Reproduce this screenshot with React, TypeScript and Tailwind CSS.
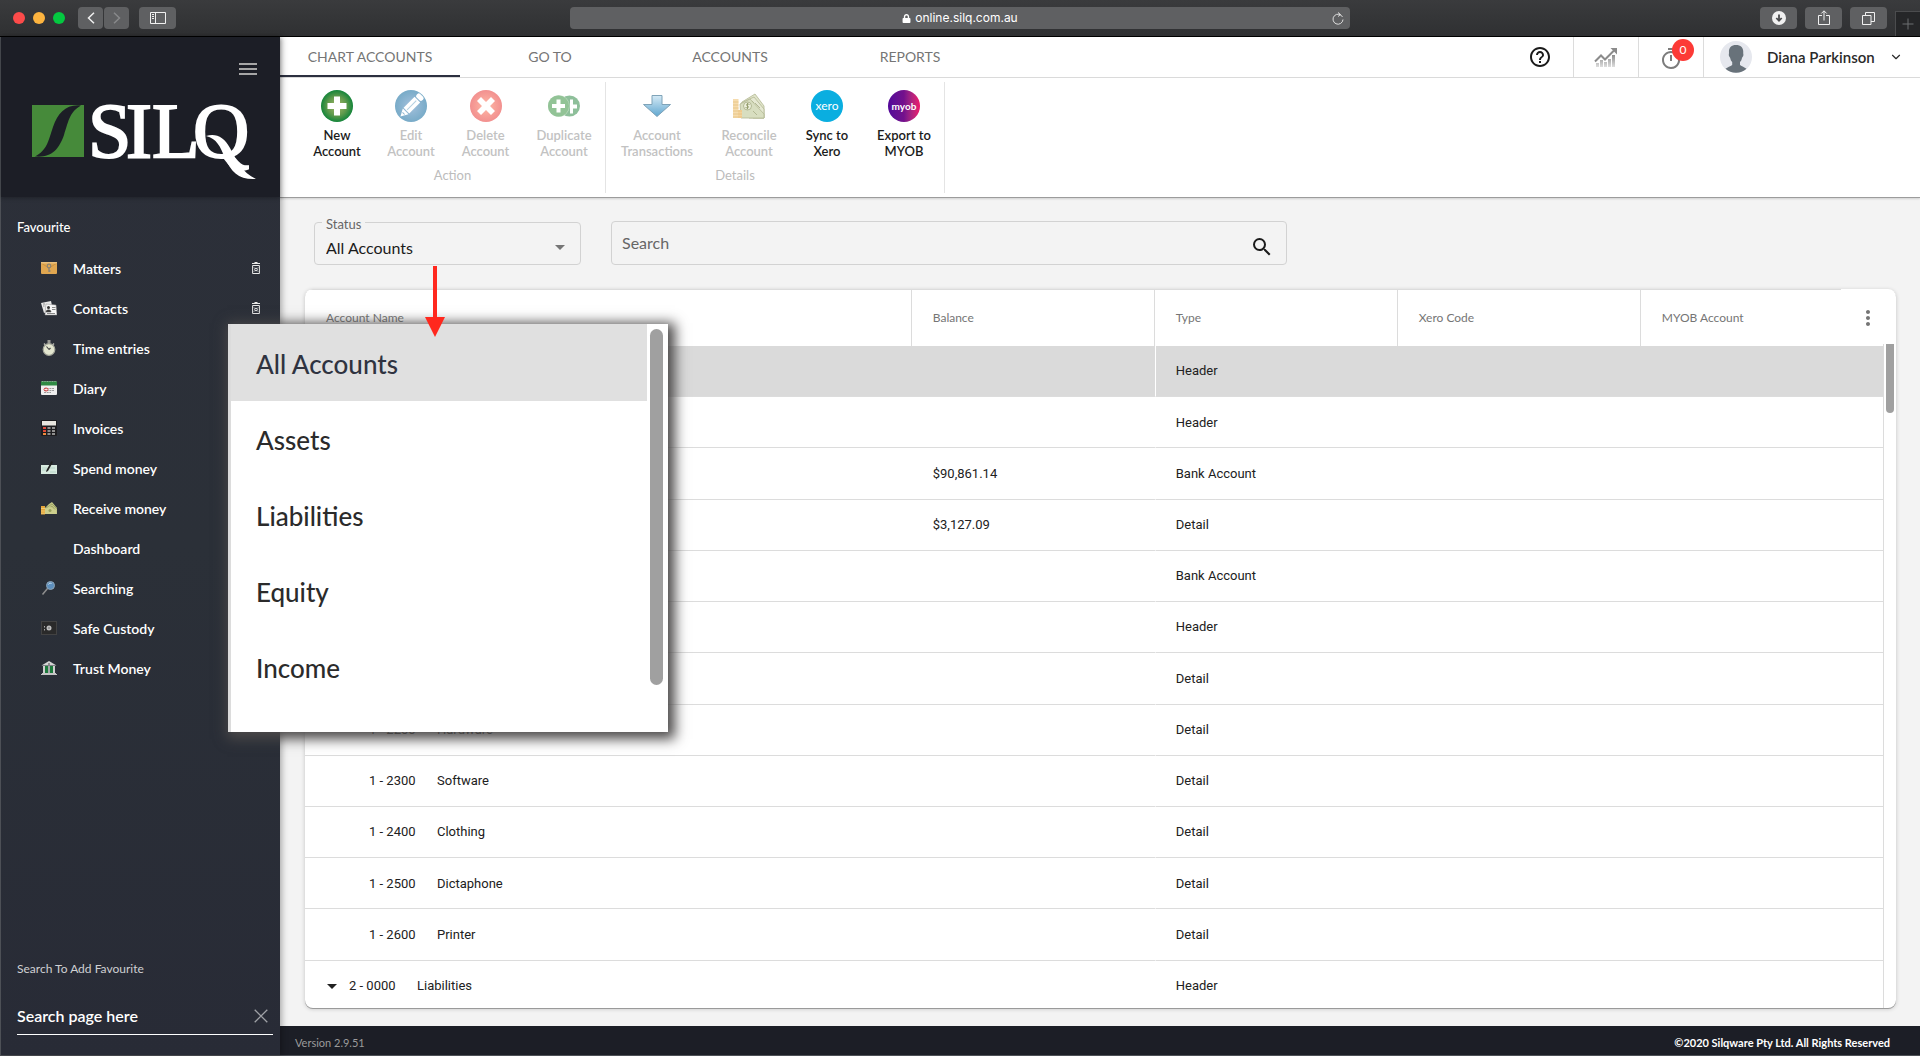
import type { ReactNode } from "react";
import { MdArrowDropDown, MdHelpOutline, MdMoreVert, MdOutlineTimer, MdSearch } from "react-icons/md";
import { FiChevronDown } from "react-icons/fi";
import { FaLock } from "react-icons/fa";

/* ---------- browser chrome ---------- */

function ChromeButton({ label, width, children }: { label: string; width: string; children: ReactNode }) {
  return (
    <button aria-label={label} className={`flex h-[22px] items-center justify-center rounded bg-[#5f6062] text-white ${width}`}>
      {children}
    </button>
  );
}

function TitleBar() {
  return (
    <header className="grid h-[37px] shrink-0 grid-cols-[1fr_minmax(0,780px)_1fr] items-center border-b border-black bg-linear-to-b from-[#3a3b3d] to-[#2f3032]">
      <div className="flex items-center pl-[13px]">
        <div className="flex gap-2">
          <span className="size-3 rounded-full bg-[#fc4b4a]" />
          <span className="size-3 rounded-full bg-[#fdb43f]" />
          <span className="size-3 rounded-full bg-[#04c840]" />
        </div>
        <div className="ml-[13px] flex gap-px">
          <ChromeButton label="Back" width="w-[25px]">
            <svg width="8" height="12" viewBox="0 0 8 12" fill="none" stroke="#f0f0f0" strokeWidth="1.5"><path d="M7 .7 1.5 6 7 11.3" /></svg>
          </ChromeButton>
          <ChromeButton label="Forward" width="w-[25px]">
            <svg width="8" height="12" viewBox="0 0 8 12" fill="none" stroke="#88898b" strokeWidth="1.5"><path d="M1 .7 6.500 6 1 11.3" /></svg>
          </ChromeButton>
        </div>
        <div className="ml-[10px]">
          <ChromeButton label="Toggle sidebar" width="w-[37px]">
            <svg width="16" height="12" viewBox="0 0 16 12" fill="none" stroke="#f0f0f0"><path d="M.5.5h15v11H.5zM5.500.5v11M2 2.500h2M2 4.500h2M2 6.500h2" /></svg>
          </ChromeButton>
        </div>
      </div>
      <div className="relative flex h-[22px] items-center justify-center gap-1 rounded bg-[#5f6062] font-['Inter',sans-serif] text-xs text-white">
        <FaLock size={9} />
        <span>online.silq.com.au</span>
        <button aria-label="Reload" className="absolute right-1.5">
          <svg width="12" height="13" viewBox="0 0 12 13" fill="none" stroke="#dedede"><path d="M10.500 5A5 5 0 1 0 11 7.500M6 .5l2.500 2L6 4.500" /></svg>
        </button>
      </div>
      <div className="flex h-full items-center justify-end gap-2">
        <ChromeButton label="Downloads" width="w-[37px]">
          <svg width="14" height="14" viewBox="0 0 14 14"><circle cx="7" cy="7" r="7" fill="#f0f0f0" /><path d="M7 3.500v6M4.300 7 7 9.800 9.700 7" fill="none" stroke="#4a4b4d" strokeWidth="1.800" /></svg>
        </ChromeButton>
        <ChromeButton label="Share" width="w-[37px]">
          <svg width="12" height="16" viewBox="0 0 12 16" fill="none" stroke="#f0f0f0"><path d="M4 5.500H.5v9h11v-9H8M6 10.500V1M3.300 3.500 6 .8l2.700 2.700" /></svg>
        </ChromeButton>
        <ChromeButton label="Show tabs" width="w-[37px]">
          <svg width="13" height="13" viewBox="0 0 13 13" fill="none" stroke="#f0f0f0"><path d="M.5 3.500h8.500v9H.5zM3.500 3.500v-3h9v9H9" /></svg>
        </ChromeButton>
        <button aria-label="New tab" className="flex h-[25px] w-[25px] items-center justify-center self-end border-t border-l border-[#4b4c4e] bg-[#252628]">
          <svg width="12" height="12" viewBox="0 0 12 12" stroke="#6d6e70"><path d="M6 .5v11M.5 6h11" /></svg>
        </button>
      </div>
    </header>
  );
}

/* ---------- sidebar ---------- */

function Logo() {
  return (
    <svg width="226" height="106" viewBox="31 80 226 106" role="img" aria-label="SILQ">
      <rect x="32" y="105" width="52" height="52" fill="#468a3a" />
      <path d="M81 105.500C66 104 58 113 53 127C48 142 47 150 35 156.500C52 158 59 149 64 135C69 119 70 112 81 105.500Z" fill="#1c1e26" />
      <text x="88 126 152 193" y="157" fill="#fff" stroke="#fff" strokeWidth="2" fontFamily="Liberation Serif, serif" fontSize="78">SILQ</text>
      <path d="M206 136c10-3 18 1 24 12 7 14 12 24 26 31-17 1-25-7-31-21-5-12-8-19-19-22Z" fill="#fff" />
    </svg>
  );
}

const itemIcons: Record<string, ReactNode> = {
  Matters: (
    <>
      <rect y="2" width="16" height="12" rx="1" fill="#e0a650" />
      <path d="M0 3l8 5 8-5" fill="none" stroke="#c48a3a" strokeWidth=".7" />
      <rect x="0" y="2" width="16" height="1.500" fill="#eac07c" />
      <circle cx="8" cy="6" r="1.800" fill="none" stroke="#8a8476" strokeWidth="1.200" />
      <path d="M8 7.500v4.500M8 11h1.500" stroke="#8a8476" strokeWidth="1.300" />
    </>
  ),
  Contacts: (
    <>
      <path d="M0 3l10-2 2 9-9 3z" fill="#e9e9e9" />
      <path d="M5 4l10 1 1 10-12 0z" fill="#f7f7f7" stroke="#8a8a8a" strokeWidth=".5" />
      <circle cx="7.500" cy="7.500" r="1.500" fill="#333" />
      <path d="M5 12c0-3 5-3 5 0zM2 4l2 0M2 6l1.500 0" fill="#333" stroke="#555" strokeWidth=".6" />
      <path d="M11 7.500h3.500M11 9.500h3.500M6 13.500h8" stroke="#888" />
    </>
  ),
  "Time entries": (
    <>
      <rect x="6.500" y="0" width="3" height="3.500" fill="#9a9a94" />
      <path d="M3 3.500l1.500 1.500M13 3.500l-1.500 1.500" stroke="#b7b7b0" strokeWidth="1.500" />
      <circle cx="8" cy="9.500" r="5.800" fill="#e3e6cf" stroke="#a5a79b" strokeWidth="1.200" />
      <path d="M8 9.500L5.500 6.500M8 9.500l1.500-1.500" stroke="#444" strokeWidth="1.100" />
    </>
  ),
  Diary: (
    <>
      <rect y="1.500" width="16" height="13.500" rx="1" fill="#efefef" />
      <path d="M0 1.500h16V5.500H0z" fill="#2f8a44" />
      <path d="M1 1.500h14" stroke="#7fb48a" strokeDasharray="1 1.500" />
      <path d="M3 8.500h10M3 10.500h10M3 12.500h7" stroke="#9a9a9a" strokeDasharray="2 .7" />
      <ellipse cx="5" cy="9.500" rx="2" ry="1.500" fill="none" stroke="#d44" />
    </>
  ),
  Invoices: (
    <>
      <rect width="16" height="16" rx="1" fill="#1d1d1f" />
      <rect x="1" y="1" width="14" height="4.500" fill="#e8e6df" />
      <path d="M2 8h3M2 11h3" stroke="#e04a3a" strokeWidth="2" />
      <path d="M2 14h3" stroke="#f08a3c" strokeWidth="2" />
      <path d="M6.500 8h3M11 8h3M6.500 11h3M11 11h3M6.500 14h3M11 14h3" stroke="#8f8f8f" strokeWidth="1.800" />
    </>
  ),
  "Spend money": (
    <>
      <rect y="5" width="16" height="9" fill="#d8ebe0" />
      <path d="M1 8h5M1 10h4M9 12h6M9 8h5" stroke="#aac8ba" strokeWidth=".7" />
      <path d="M10.500 1l1.500 1-5 9-2 1 .5-2z" fill="#222" />
    </>
  ),
  "Receive money": (
    <>
      <path d="M4 8l4-4 3-2 5 6v6H4z" fill="#c3c786" />
      <path d="M5 8l6-4 5 5M6 10l5-4 4 5" fill="none" stroke="#8f9658" strokeWidth=".7" />
      <path d="M4 9l5-2 6 3v4H4z" fill="#cdcf8d" />
      <circle cx="9" cy="10.500" r="1.500" fill="#98a05c" />
      <rect y="6" width="4" height="8.500" fill="#e5a63a" />
      <path d="M0 8.500h4M0 11h4M0 13.200h4" stroke="#f5d27e" strokeWidth=".8" />
    </>
  ),
  Searching: (
    <>
      <path d="M1.500 14.500l5-6" stroke="#8e8e8e" strokeWidth="1.500" />
      <circle cx="9.500" cy="5.500" r="4" fill="#5d8fbd" stroke="#8ea4b5" />
      <path d="M7.500 4.500c.5-1.500 2-1.500 3-1" stroke="#cfe2f2" fill="none" />
    </>
  ),
  "Safe Custody": (
    <>
      <rect x=".5" y="1.500" width="15" height="13" fill="#2a2a2a" stroke="#424242" />
      <circle cx="8" cy="8" r="2.500" fill="#bdbdbd" />
      <circle cx="8" cy="8" r="1" fill="#888" />
      <path d="M3.500 6v1.500M3.500 9v1.500" stroke="#aaa" />
    </>
  ),
  "Trust Money": (
    <>
      <path d="M8 1l7.500 4.500H.5z" fill="#d4d4d4" />
      <circle cx="8" cy="4" r="1" fill="#777" />
      <path d="M3 6v7M13 6v7" stroke="#cfcfcf" strokeWidth="2" />
      <path d="M5.500 6v7M10.500 6v7" stroke="#1d7a3c" strokeWidth="3" />
      <path d="M8 6v7" stroke="#cfcfcf" strokeWidth="1.500" />
      <path d="M1 13.500h14M0 14.500h16" stroke="#c4c4c4" />
    </>
  ),
};

const items = ["Matters", "Contacts", "Time entries", "Diary", "Invoices", "Spend money", "Receive money", "Dashboard", "Searching", "Safe Custody", "Trust Money"];

function TrashIcon() {
  return (
    <svg width="8" height="12" viewBox="0 0 8 12" fill="none" stroke="#e8e8e8">
      <path d="M0 1.500h8M2.500.5h3M.6 3.500h6.800v8H.6z" />
      <circle cx="4" cy="7.500" r="1.300" />
      <path d="M2 5.500l1 1M6 5.500l-1 1M2 9.500l1-1M6 9.500l-1-1" />
    </svg>
  );
}

function Sidebar() {
  return (
    <aside className="relative z-10 flex w-[280px] shrink-0 flex-col border-l border-[#4d5056] bg-linear-to-b from-[#2c2f39] via-[#2b3038] to-[#282b36] text-white shadow-[2px_0_6px_rgba(0,0,0,0.3)]">
      <div className="flex h-40 flex-col bg-[#1c1e26] shadow-[0_1px_4px_rgba(0,0,0,0.3)]">
        <button aria-label="Toggle menu" className="mt-[26px] mr-[23px] flex flex-col gap-[3px] self-end">
          <span className="h-[2px] w-[18px] bg-[#a6a6a6]" />
          <span className="h-[2px] w-[18px] bg-[#a6a6a6]" />
          <span className="h-[2px] w-[18px] bg-[#a6a6a6]" />
        </button>
        <div className="mt-[5px] ml-[30px]">
          <Logo />
        </div>
      </div>
      <h2 className="mt-5 ml-4 text-[13px] leading-5 font-medium">Favourite</h2>
      <nav className="mt-[11px] flex flex-col">
        {items.map((name) => (
          <div key={name} className="flex h-10 items-center pr-5 pl-10">
            <a href="#" className="flex flex-1 items-center gap-4 text-[14px] font-semibold">
              <svg width="16" height="16" viewBox="0 0 16 16" aria-hidden="true">{itemIcons[name]}</svg>
              {name}
            </a>
            <button aria-label={`Remove ${name}`}>
              <TrashIcon />
            </button>
          </div>
        ))}
      </nav>
      <div className="mt-auto mr-[7px] mb-5 ml-4">
        <label htmlFor="page-search" className="text-xs text-[#cfd0d3]">Search To Add Favourite</label>
        <div className="mt-5 flex h-9 items-center border-b border-white pb-0.5">
          <input id="page-search" type="text" placeholder="Search page here" className="min-w-0 flex-1 bg-transparent text-base font-semibold outline-none placeholder:text-white" />
          <button aria-label="Clear" className="mr-[5px]">
            <svg width="14" height="14" viewBox="0 0 14 14" stroke="#9fa1a6" strokeWidth="1.300"><path d="M.7.7l12.600 12.600M13.300.7.7 13.300" /></svg>
          </button>
        </div>
      </div>
    </aside>
  );
}

/* ---------- top bar ---------- */

const tabs = ["CHART ACCOUNTS", "GO TO", "ACCOUNTS", "REPORTS"];

function TopBar() {
  return (
    <div className="flex h-[41px] shrink-0 items-stretch border-b border-[#dcdcdc] bg-white">
      <nav className="flex flex-1">
        {tabs.map((tab, i) => (
          <button key={tab} className={i === 0 ? "w-[180px] border-b-2 border-[#2c3040] text-[14px] text-[#757575]" : "w-[180px] border-b-2 border-transparent text-[14px] text-[#757575]"}>
            {tab}
          </button>
        ))}
      </nav>
      <button aria-label="Help" className="flex w-[66px] items-center justify-center text-[#1b1b1b]">
        <MdHelpOutline size={24} />
      </button>
      <button aria-label="Statistics" className="flex w-[65px] items-center justify-center border-l border-[#dcdcdc]">
        <svg width="24" height="20" viewBox="0 0 24 20" fill="none">
          <defs><linearGradient id="bars" x1="0" y1="8" x2="0" y2="20" gradientUnits="userSpaceOnUse"><stop offset="0" stopColor="#8f8f8f" /><stop offset="1" stopColor="#dedede" /></linearGradient></defs>
          <path d="M2 16h3v4H2zM6 13h3v7H6zM10 15h3v5h-3zM14 12h3v8h-3zM18 8h3v12h-3z" fill="url(#bars)" />
          <path d="M1 14.500l6-6 4 4 9-9" stroke="#8b8b8b" strokeWidth="2" />
          <path d="M16.500 1H23v6.500z" fill="#8b8b8b" />
        </svg>
      </button>
      <button aria-label="Timers" className="relative flex w-[65px] items-center justify-center border-l border-[#dcdcdc] pt-1 text-[#7c7c7c]">
        <MdOutlineTimer size={24} />
        <span className="absolute top-0.5 right-[9px] flex size-[22px] items-center justify-center rounded-full bg-[#fc3a36] text-xs text-white">0</span>
      </button>
      <button className="flex w-[217px] items-center border-l border-[#dcdcdc] pr-[17px] pl-4 text-[15px] font-semibold text-[#2a2a2a]">
        <svg width="32" height="32" viewBox="0 0 32 32" className="mr-[15px]">
          <circle cx="16" cy="16" r="16" fill="#e6e8ee" />
          <path d="M16 4c-5 0-7.500 3-7 8 0 1-.5 1.500 0 3 .3 1 1 1.200 1.200 2 .4 2 1 3 2 4v3c-2 1.500-4.500 2-6.700 3.800A16 16 0 0 0 26.500 27.800C24.300 26 22 25.500 20 24v-3c1-1 1.600-2 2-4 .2-.8.900-1 1.200-2 .5-1.500 0-2 0-3 .5-5-2.200-8-7.200-8z" fill="#68727a" />
        </svg>
        Diana Parkinson
        <FiChevronDown size={14} className="ml-auto" />
      </button>
    </div>
  );
}

/* ---------- ribbon ---------- */

const plusPath = "M13 6.500h6V13h6.500v6H19v6.500h-6V19H6.500v-6H13z";

const NewIcon = (
  <svg width="32" height="32" viewBox="0 0 32 32">
    <defs><radialGradient id="green"><stop offset="0" stopColor="#a9b86a" /><stop offset=".6" stopColor="#5f9a4c" /><stop offset="1" stopColor="#14853a" /></radialGradient></defs>
    <circle cx="16" cy="16" r="16" fill="url(#green)" />
    <path d={plusPath} fill="#fff" />
  </svg>
);
const EditIcon = (
  <svg width="32" height="32" viewBox="0 0 32 32">
    <defs><radialGradient id="blue"><stop offset="0" stopColor="#a3c0dc" /><stop offset="1" stopColor="#78abc8" /></radialGradient></defs>
    <circle cx="16" cy="16" r="16" fill="url(#blue)" />
    <g transform="rotate(45 16 16)" fill="#fff">
      <rect x="12" y="1" width="8" height="5" rx="2" />
      <path d="M12 7h8v15.500h-8z" />
      <path d="M12 23.500h8l-4 7.500z" />
      <path d="M16 8.500v13" stroke="#b4cfe0" />
      <path d="M14.500 26.500h3" stroke="#8db6cf" />
    </g>
  </svg>
);
const DeleteIcon = (
  <svg width="32" height="32" viewBox="0 0 32 32">
    <defs><radialGradient id="red"><stop offset="0" stopColor="#ffb9a6" /><stop offset="1" stopColor="#f2908f" /></radialGradient></defs>
    <circle cx="16" cy="16" r="16" fill="url(#red)" />
    <path d="M16 12l5-5 4 4-5 5 5 5-4 4-5-5-5 5-4-4 5-5-5-5 4-4z" fill="#fff" />
  </svg>
);
const DuplicateIcon = (
  <svg width="32" height="32" viewBox="0 0 32 32">
    <circle cx="21.500" cy="16" r="10.500" fill="#8ebf9a" />
    <path d="M22 9.500h3v5h4v4h-4v5h-3" fill="#fff" />
    <circle cx="10.800" cy="16" r="10.800" fill="#b9d8bd" />
    <circle cx="10.500" cy="16" r="10.500" fill="#92c396" />
    <path d="M8.500 9.500h4V14H17v4h-4.500v4.500h-4V18H4v-4h4.500z" fill="#fff" />
  </svg>
);
const TransactionsIcon = (
  <svg width="32" height="32" viewBox="0 0 32 32">
    <defs><linearGradient id="arrow" x2="0" y2="1"><stop offset="0" stopColor="#d5eaf6" /><stop offset="1" stopColor="#5fa6cf" /></linearGradient></defs>
    <path d="M11 5.500h10v9h8.500L16 26.500 2.500 14.500H11z" fill="url(#arrow)" stroke="#7fa3b8" strokeLinejoin="round" />
  </svg>
);
const ReconcileIcon = (
  <svg width="32" height="32" viewBox="0 0 32 32">
    <g stroke="#b2b893" strokeWidth=".8" strokeLinejoin="round">
      <path d="M9 12L22 4l9 12v12H20z" fill="#e0e4ca" />
      <path d="M8 13l13-6 10 12v9H16z" fill="#e5e8d2" />
      <path d="M7 14l10-5 14 15v4H8z" fill="#d8dec0" />
    </g>
    <circle cx="14.500" cy="16" r="4" fill="#edf0dc" stroke="#b2b893" />
    <path d="M16.500 14.500c-3-1.500-4 .8-2 1.500s1 2.500-2 1.500M14.500 12.800v6.500" fill="none" stroke="#97a070" />
    <path d="M20 21l4 4M22 13l5 5M19 11l2 2" stroke="#b2b893" />
    <rect x="0" y="9" width="5.500" height="19" fill="#f6dcae" />
    <rect x="5" y="20" width="4" height="8" fill="#f3d39c" />
    <path d="M0 12h5.500M0 15h5.500M0 18h5.500M0 21h9M0 24h9M0 27h9" stroke="#e6c07e" strokeWidth=".8" />
  </svg>
);
const XeroIcon = <span className="flex size-8 items-center justify-center rounded-full bg-[#0aaee0] text-[12px] leading-none font-normal text-white">xero</span>;
const MyobIcon = <span className="flex size-8 items-center justify-center rounded-full bg-linear-to-r from-[#53079a] via-[#74108c] to-[#f0156a] text-[10px] leading-none font-bold text-white">myob</span>;

type Action = { lines: [string, string]; icon: ReactNode; width: string; disabled?: boolean };
const groups: { name: string; actions: Action[] }[] = [
  {
    name: "Action",
    actions: [
      { lines: ["New", "Account"], icon: NewIcon, width: "w-[74px]" },
      { lines: ["Edit", "Account"], icon: EditIcon, width: "w-[74px]", disabled: true },
      { lines: ["Delete", "Account"], icon: DeleteIcon, width: "w-[75px]", disabled: true },
      { lines: ["Duplicate", "Account"], icon: DuplicateIcon, width: "w-[82px]", disabled: true },
    ],
  },
  {
    name: "Details",
    actions: [
      { lines: ["Account", "Transactions"], icon: TransactionsIcon, width: "w-[102px]", disabled: true },
      { lines: ["Reconcile", "Account"], icon: ReconcileIcon, width: "w-[82px]", disabled: true },
      { lines: ["Sync to", "Xero"], icon: XeroIcon, width: "w-[74px]" },
      { lines: ["Export to", "MYOB"], icon: MyobIcon, width: "w-[80px]" },
    ],
  },
];

function Ribbon() {
  return (
    <div className="flex h-[120px] shrink-0 border-b border-[#9c9c9c] bg-white pl-5 shadow-[0_1px_2px_rgba(0,0,0,0.15)]">
      {groups.map((group, gi) => (
        <section key={group.name} aria-label={group.name} className="my-1 flex flex-col border-r border-[#e4e4e4] pt-2">
          <div className="flex">
            {group.actions.map((a) => (
              <button key={a.lines.join()} disabled={a.disabled} className={`flex flex-col items-center text-[13px] leading-4 font-semibold ${a.width} ${a.disabled ? "text-[#c2c2c2]" : "text-[#1b1b1b]"}`}>
                {a.icon}
                <span className="mt-[5px]">{a.lines[0]}</span>
                <span>{a.lines[1]}</span>
              </button>
            ))}
          </div>
          <p className={`mt-2 text-[13px] leading-4 text-[#bcbcbc] ${gi === 0 ? "text-center" : "pr-20 text-center"}`}>{group.name}</p>
        </section>
      ))}
    </div>
  );
}

/* ---------- filters ---------- */

const statuses = ["All Accounts", "Assets", "Liabilities", "Equity", "Income"];

function StatusMenu() {
  return (
    <div className="absolute top-[102px] left-[-86px] z-20 flex h-[408px] w-[440px] overflow-hidden border-l-[3px] border-[#dcdcdc] bg-white shadow-[3px_3px_12px_4px_#4b4949]">
      <ul role="listbox" aria-label="Status" className="flex-1">
        {statuses.map((s, i) => (
          <li key={s} role="option" aria-selected={i === 0} className={i === 0 ? "flex h-[77px] items-center bg-[#e0e0e0] pt-1 pl-[25px] text-[26px] font-medium text-[#2f3340]" : "flex h-[76px] items-center pt-0.5 pl-[25px] text-[26px] font-medium text-[#2b2b2b]"}>
            {s}
          </li>
        ))}
      </ul>
      <div className="w-[21px] pt-[5px] pl-[3px]">
        <div className="h-[356px] w-[13px] rounded-full bg-[#a0a0a0]" />
      </div>
    </div>
  );
}

function Filters() {
  return (
    <div className="flex items-end">
      <div className="relative ml-[9px]">
        <label htmlFor="status" className="absolute -top-1.5 left-2 bg-[#f3f3f3] px-1 text-[13px] leading-4 text-[#666]">Status</label>
        <select id="status" className="h-[43px] w-[267px] appearance-none rounded border border-[#d2d2d2] bg-transparent pt-2 pl-[11px] text-base leading-6 text-[#1b1b1b]">
          {statuses.map((s) => <option key={s}>{s}</option>)}
        </select>
        <MdArrowDropDown size={24} className="pointer-events-none absolute top-[13px] right-[9px] text-[#757575]" />
        <StatusMenu />
        <svg width="20" height="72" viewBox="0 0 20 72" className="absolute top-[43px] left-[111px] z-30" aria-hidden="true">
          <path d="M8 1h4v51h8L10 72 0 52h8z" fill="#ff281e" />
        </svg>
      </div>
      <div className="ml-[30px] flex h-11 w-[676px] items-center rounded border border-[#d2d2d2] pr-3">
        <input type="text" aria-label="Search" placeholder="Search" className="min-w-0 flex-1 bg-transparent pl-[10px] text-base outline-none placeholder:text-[#666]" />
        <button aria-label="Run search" className="pt-2 text-[#1b1b1b]">
          <MdSearch size={24} />
        </button>
      </div>
    </div>
  );
}

/* ---------- table ---------- */

type Row = { code?: string; name?: string; balance?: string; type: string; parent?: boolean };
const rows: Row[] = [
  { type: "Header" },
  { type: "Header" },
  { balance: "$90,861.14", type: "Bank Account" },
  { balance: "$3,127.09", type: "Detail" },
  { type: "Bank Account" },
  { type: "Header" },
  { type: "Detail" },
  { code: "1 - 2200", name: "Hardware", type: "Detail" },
  { code: "1 - 2300", name: "Software", type: "Detail" },
  { code: "1 - 2400", name: "Clothing", type: "Detail" },
  { code: "1 - 2500", name: "Dictaphone", type: "Detail" },
  { code: "1 - 2600", name: "Printer", type: "Detail" },
  { code: "2 - 0000", name: "Liabilities", type: "Header", parent: true },
];

function AccountCell({ row }: { row: Row }) {
  if (!row.code) return null;
  return (
    <div className={row.parent ? "flex items-center pl-[15px]" : "flex items-center pl-16"}>
      {row.parent && <MdArrowDropDown size={24} className="mr-[5px]" />}
      <span className="w-[68px]">{row.code}</span>
      <span>{row.name}</span>
    </div>
  );
}

function AccountsTable() {
  const head = "border-t border-r border-[#dcdcdc] pl-[21px] text-left text-xs font-normal text-[#757575]";
  return (
    <div className="mt-[24px] flex min-h-0 flex-1 overflow-hidden rounded-lg bg-white shadow-[0_1px_0_#9a9a9a,0_1px_4px_rgba(0,0,0,0.2)]">
      <table className="h-[723px] flex-1 table-fixed border-separate border-spacing-0 self-start">
        <colgroup>
          <col className="w-[38.45%]" />
          <col className="w-[15.4%]" />
          <col className="w-[15.4%]" />
          <col className="w-[15.4%]" />
          <col className="w-[15.35%]" />
        </colgroup>
        <thead>
          <tr className="h-[57px]">
            <th className={head}>Account Name</th>
            <th className={head}>Balance</th>
            <th className={head}>Type</th>
            <th className={head}>Xero Code</th>
            <th className="p-0 text-left text-xs font-normal text-[#757575]">
              <div className="flex h-[57px] items-center">
                <div className="flex h-full flex-1 items-center border-t border-[#dcdcdc] pl-[21px]">MYOB Account</div>
                <button aria-label="Columns" className="flex w-[42px] justify-center pl-3">
                  <MdMoreVert size={24} />
                </button>
              </div>
            </th>
          </tr>
        </thead>
        <tbody className="font-['Roboto',sans-serif] text-[13px] text-[#212121]">
          {rows.map((row, i) => {
            const cell = i === 0 ? "border-b border-[#dcdcdc] bg-[#dadada] py-0" : "border-b border-[#dcdcdc] py-0";
            return (
              <tr key={i} className="h-[51px]">
                <td className={cell}><AccountCell row={row} /></td>
                <td className={`${cell} pl-[21px]`}>{row.balance}</td>
                <td className={`${cell} border-l border-l-white pl-5`}>{row.type}</td>
                <td className={cell} />
                <td className={cell} />
              </tr>
            );
          })}
        </tbody>
      </table>
      <div className="mt-[55px] w-[13px] shrink-0 border-l border-[#dcdcdc] pl-[2px]">
        <div className="h-[69px] w-2 rounded-b-full bg-[#a0a0a0]" />
      </div>
    </div>
  );
}

/* ---------- page ---------- */

export default function App() {
  return (
    <div className="flex h-screen flex-col overflow-hidden bg-[#f3f3f3] font-['Lato',sans-serif]">
      <TitleBar />
      <div className="flex min-h-0 flex-1 border-b border-[#4d5056]">
        <Sidebar />
        <div className="flex min-w-0 flex-1 flex-col">
          <TopBar />
          <Ribbon />
          <main className="flex min-h-0 flex-1 flex-col pt-[23px] pr-6 pb-[18px] pl-[25px]">
            <Filters />
            <AccountsTable />
          </main>
          <footer className="flex h-[29px] shrink-0 items-center justify-between bg-[#1c1e26] pt-1.5 pr-[30px] pl-[15px] text-[11px]">
            <span className="text-[#9b9b9b]">Version 2.9.51</span>
            <span className="font-bold text-white">©2020 Silqware Pty Ltd. All Rights Reserved</span>
          </footer>
        </div>
      </div>
    </div>
  );
}
